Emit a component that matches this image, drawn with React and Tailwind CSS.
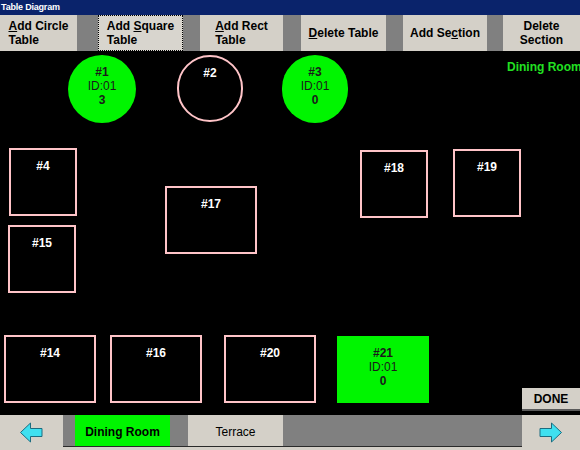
import React from 'react'

const tables = [
  { id: 1, shape: 'circle', green: true, x: 68, y: 4, w: 68, h: 68, sub: '3' },
  { id: 2, shape: 'circle', x: 177, y: 4, w: 66, h: 67 },
  { id: 3, shape: 'circle', green: true, x: 282, y: 4, w: 66, h: 68, sub: '0' },
  { id: 4, x: 9, y: 97, w: 68, h: 68 },
  { id: 15, x: 8, y: 174, w: 68, h: 68 },
  { id: 17, x: 165, y: 135, w: 92, h: 68 },
  { id: 18, x: 360, y: 99, w: 68, h: 68 },
  { id: 19, x: 453, y: 98, w: 68, h: 68 },
  { id: 14, x: 4, y: 284, w: 92, h: 68 },
  { id: 16, x: 110, y: 284, w: 92, h: 68 },
  { id: 20, x: 224, y: 284, w: 92, h: 68 },
  { id: 21, green: true, x: 337, y: 285, w: 92, h: 67, sub: '0' },
]

function Arrow({ dir }) {
  return (
    <svg width="24" height="21" viewBox="0 0 24 21" className={dir === 'left' ? '-scale-x-100' : ''}>
      <path d="M1 6.5 H12.5 V1 L22.5 10.5 L12.5 20 V14.5 H1 Z" fill="#3fe0f0" stroke="#1c6c80" strokeWidth="1" />
    </svg>
  )
}

function TableShape({ t }) {
  const round = t.shape === 'circle' ? 'rounded-full' : ''
  const box = t.green
    ? 'bg-[#00f500] text-[#1a1a1a] pt-[10px]'
    : 'border-2 border-[#ffc4c8] text-white pt-[9px]'
  return (
    <div
      className={`absolute flex flex-col items-center text-[12px] leading-[14px] ${round} ${box}`}
      style={{ left: t.x, top: t.y, width: t.w, height: t.h }}
    >
      <span className="font-bold">#{t.id}</span>
      {t.green && <span>ID:01</span>}
      {t.green && <span className="font-bold">{t.sub}</span>}
    </div>
  )
}

export default function App() {
  return (
    <div className="w-[580px] h-[450px] overflow-hidden flex flex-col bg-black font-['Liberation_Sans',Arial,sans-serif] text-black">
      {/* title bar */}
      <div className="h-[15px] bg-[#0a236b] text-white text-[9px] font-bold leading-[15px] pl-[1px] tracking-[-0.2px]">
        Table Diagram
      </div>

      {/* toolbar */}
      <div className="h-[36px] flex bg-[#808080] text-[12px] leading-[14px] font-bold">
        <div className="w-[77px] bg-[#d4d0c8] flex items-center justify-center">
          <div className="text-left"><u>A</u>dd Circle<br />Table</div>
        </div>
        <div className="w-[85px] ml-[21px] bg-[#d8d5ce] flex items-center justify-center border border-dotted border-black">
          <div className="text-left">Add <u>S</u>quare<br />Table</div>
        </div>
        <div className="w-[83px] ml-[17px] bg-[#d4d0c8] flex items-center justify-center">
          <div className="text-left"><u>A</u>dd Rect<br />Table</div>
        </div>
        <div className="w-[85px] ml-[18px] bg-[#d4d0c8] flex items-center justify-center">
          <div><u>D</u>elete Table</div>
        </div>
        <div className="w-[84px] ml-[17px] bg-[#d4d0c8] flex items-center justify-center">
          <div>Add Se<u>c</u>tion</div>
        </div>
        <div className="w-[77px] ml-[16px] bg-[#d4d0c8] flex items-center justify-center">
          <div className="text-center">Delete<br />Section</div>
        </div>
      </div>

      {/* canvas */}
      <div className="relative h-[364px] bg-black">
        {tables.map(t => <TableShape key={t.id} t={t} />)}
        <div className="absolute left-[507px] top-[7px] text-[12px] font-bold text-[#22e022] whitespace-nowrap">
          Dining Room
        </div>
        <div className="absolute left-[522px] top-[337px] w-[58px] h-[23px] bg-[#d4d0c8] border-b-2 border-[#5a5a5a] flex items-center justify-center text-[12px] font-bold">
          DONE
        </div>
      </div>

      {/* section tabs */}
      <div className="h-[35px] flex">
        <div className="w-[63px] bg-[#d4d0c8] flex items-center justify-center pb-[1px] pr-[2px]">
          <Arrow dir="left" />
        </div>
        <div className="flex-1 flex flex-col bg-[#d4d0c8]">
          <div className="h-[32px] flex bg-[#808080] border-b border-[#2a2a2a] text-[12px]">
            <div className="w-[95px] ml-[12px] bg-[#00f500] flex items-center justify-center pt-[3px] font-bold">
              Dining Room
            </div>
            <div className="w-[95px] ml-[18px] bg-[#d4d0c8] flex items-center justify-center pt-[3px]">
              Terrace
            </div>
          </div>
        </div>
        <div className="w-[58px] bg-[#d4d0c8] flex items-center justify-center pb-[1px]">
          <Arrow dir="right" />
        </div>
      </div>
    </div>
  )
}
